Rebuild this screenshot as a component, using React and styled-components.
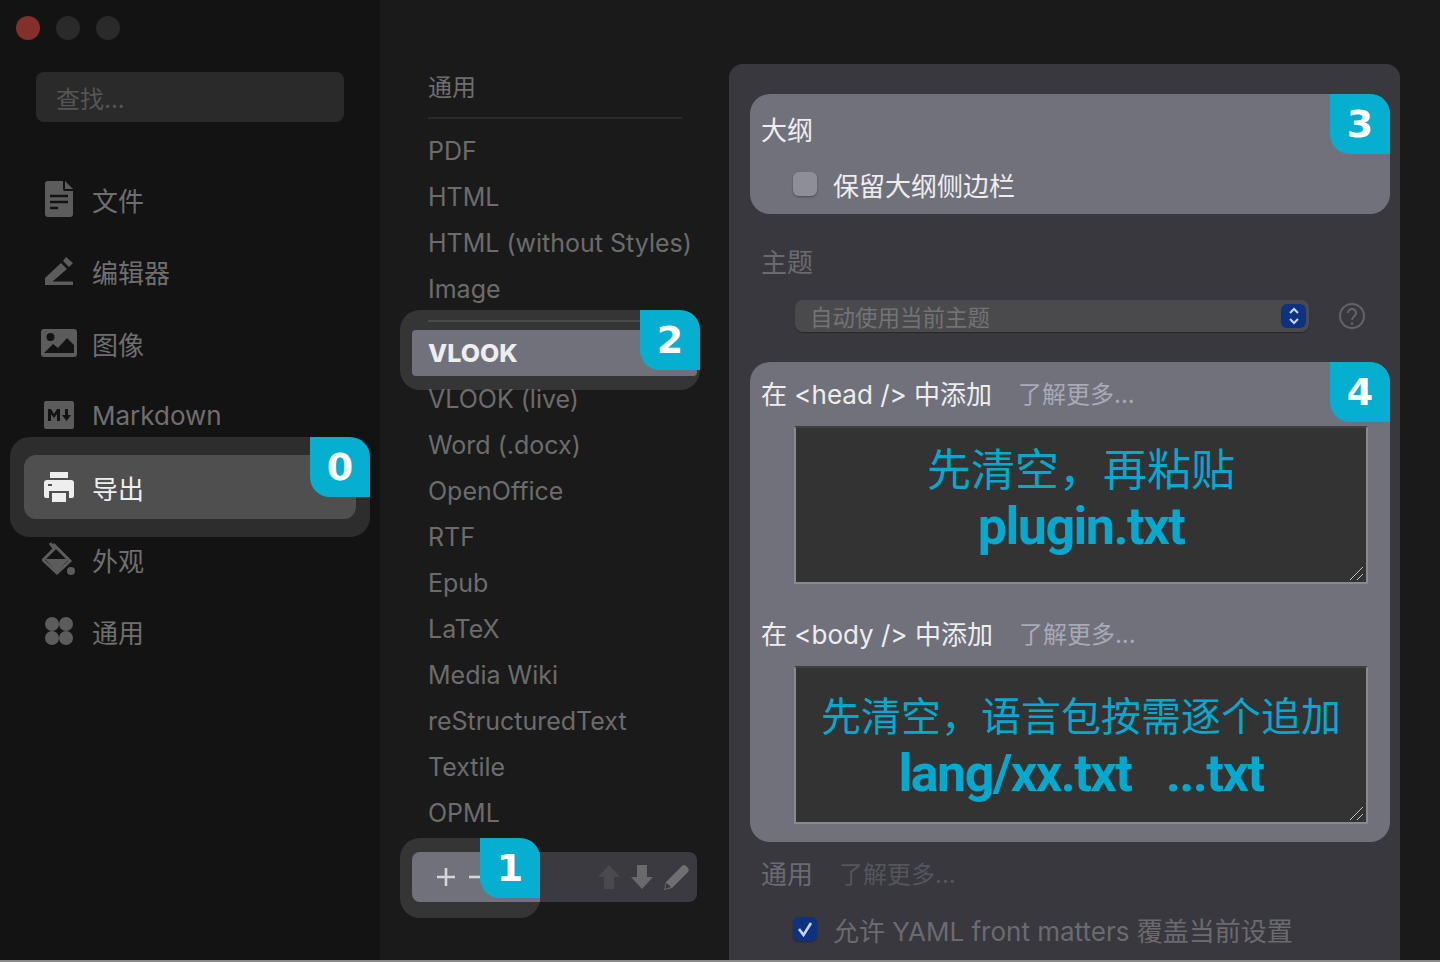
import React from "react";
import styled, { createGlobalStyle } from "styled-components";

const FONT = `Inter, "Noto Sans CJK SC", sans-serif`;
const CYAN = "#06aed0";
const ROW = "#71717c";

const Global = createGlobalStyle`
  html, body { margin: 0; padding: 0; background: #1a1a1a; }
  body { font-family: ${FONT}; overflow: hidden; }
  * { box-sizing: border-box; }
`;

const Window = styled.div`
  width: 1440px; height: 962px; display: flex; flex-direction: column; overflow: hidden;
`;
const Main = styled.div`
  flex: 1; min-height: 0; display: flex;
`;
const BottomLine = styled.div`
  height: 2px; background: #8a8a8a;
`;

/* ---------- sidebar ---------- */
const Sidebar = styled.aside`
  width: 380px; flex: none; background: #131313; padding-top: 16px; isolation: isolate;
`;
const Lights = styled.div`
  display: flex; gap: 16px; padding-left: 16px;
`;
const Light = styled.span`
  width: 24px; height: 24px; border-radius: 50%; background: ${p => p.$c};
`;
const Search = styled.div`
  margin: 32px 0 0 36px; width: 308px; height: 50px; border-radius: 8px; background: #2a2a2a;
  padding-left: 20px; display: flex; align-items: center; font-size: 24px; color: #555;
`;
const Nav = styled.nav`
  margin-top: 45px; display: flex; flex-direction: column; gap: 8px; padding: 0 24px;
`;
const NavRow = styled.div`
  position: relative; height: 64px; display: flex; align-items: center; gap: 14px;
  padding-left: 16px; border-radius: 12px; font-size: 26px;
  color: ${p => (p.$active ? "#eeeeee" : "#6f6f6f")};
  background: ${p => (p.$active ? "#4f4f4f" : "transparent")};
  ${p => p.$active && `
    &::before {
      content: ""; position: absolute; inset: -18px -14px; border-radius: 20px;
      background: #2d2d2d; z-index: -1;
    }
  `}
`;
const IconSlot = styled.span`
  width: 38px; height: 38px; flex: none; display: flex; align-items: center; justify-content: center;
  svg { display: block; }
`;
const Badge = styled.span`
  position: absolute; z-index: 3; top: ${p => p.$top || 0}px; right: ${p => p.$right || 0}px;
  width: 60px; height: 60px; background: ${CYAN}; border-radius: 0 20px 0 20px;
  display: flex; align-items: center; justify-content: center;
  color: #fff; font: bold 38px "DejaVu Sans", sans-serif;
`;

/* ---------- export list ---------- */
const ListColumn = styled.section`
  width: 349px; flex: none; padding: 65px 47px 0 48px; isolation: isolate; background: #1a1a1a;
`;
const ListHeading = styled.div`
  height: 46px; line-height: 46px; font-size: 24px; color: #6e6e6e;
`;
const Rule = styled.div`
  height: 2px; background: ${p => p.$c}; margin: ${p => p.$m};
`;
const ListItem = styled.div`
  position: relative; height: 46px; line-height: 46px; font-size: 25px; white-space: nowrap;
  color: #6c6c6c;
  ${p => p.$selected && `
    margin: 0 -15px 0 -16px; padding-left: 16px; background: ${ROW}; border-radius: 4px;
    color: #eeeeee; font-weight: 800;
    &::before {
      content: ""; position: absolute; top: -20px; left: -12px; right: -3px; bottom: -14px;
      border-radius: 20px; background: #353535; z-index: -1;
    }
  `}
`;
const Toolbar = styled.div`
  margin: 16px -15px 0 -16px; height: 50px; display: flex; background: #3a3a40; border-radius: 8px;
`;
const ToolLeft = styled.div`
  position: relative; width: 128px; background: ${ROW}; border-radius: 8px 0 0 8px;
  display: flex; align-items: center; padding-left: 24px; gap: 13px;
  &::before {
    content: ""; position: absolute; top: -14px; left: -12px; right: 0; bottom: -16px;
    border-radius: 20px; background: #353535; z-index: -1;
  }
`;
const ToolRight = styled.div`
  flex: 1; display: flex; align-items: center; justify-content: flex-end; gap: 11px; padding-right: 7px;
`;

/* ---------- settings panel ---------- */
const Panel = styled.section`
  width: 671px; flex: none; margin-top: 64px; background: #38383e; border-radius: 14px 14px 0 0;
  padding: 30px 10px 0 21px; overflow: hidden;
`;
const Section = styled.div`
  position: relative; background: ${ROW}; border-radius: 20px; padding: ${p => p.$pad};
  margin-top: ${p => p.$mt || 0}px; height: ${p => p.$h}px;
`;
const Title = styled.div`
  height: 36px; line-height: 36px; font-size: 26px; white-space: nowrap; padding-left: ${p => p.$pl ?? 11}px;
  margin-top: ${p => p.$mt || 0}px; color: ${p => p.$c || "#eeeeee"}; display: flex;
`;
const More = styled.span`
  margin-left: ${p => p.$ml || 26}px; font-size: 24px; color: ${p => p.$c || "#a9a9b8"};
`;
const CheckRow = styled.div`
  height: 36px; display: flex; align-items: center; gap: 16px; margin: ${p => p.$m};
  font-size: 26px; white-space: nowrap; color: ${p => p.$c};
`;
const Check = styled.span`
  width: 24px; height: 24px; border-radius: 6px; flex: none; display: flex; align-items: center; justify-content: center;
  background: ${p => p.$on ? "#0d3380" : "#8e8e99"};
  box-shadow: 0 1px 2px rgba(0,0,0,.35);
`;
const SelectRow = styled.div`
  display: flex; align-items: center; margin: 19px 0 0 45px; gap: 30px;
`;
const Select = styled.div`
  position: relative; width: 514px; height: 32px; border-radius: 8px; background: #4a4a4d; padding-left: 15px;
  display: flex; align-items: center; font-size: 22.5px; color: #737376; box-shadow: 0 1px 1px rgba(0,0,0,.3);
`;
const Stepper = styled.span`
  position: absolute; right: 3px; top: 4px; width: 25px; height: 24px; border-radius: 6px; background: #0d3380;
  display: flex; align-items: center; justify-content: center;
`;
const Code = styled.div`
  position: relative; margin: 13px 0 0 44px; width: 574px; height: 158px; background: #333;
  border: 2px solid #8a8a8a; border-top-color: #3f3f3f; border-left-color: #8a8a8a;
  text-align: center; color: #04a9cf; padding-top: ${p => p.$pt}px;
`;
const CodeNote = styled.div`
  font-size: ${p => p.$s}px; line-height: 56px; white-space: nowrap;
`;
const CodeFile = styled.div`
  font: bold 52px/58px Roboto, sans-serif; letter-spacing: ${p => p.$ls}px; white-space: pre;
`;
const Grip = styled.svg`
  position: absolute; right: 1px; bottom: 1px;
`;

const I = ({ w, h, children, ...r }) => (
  <svg width={w} height={h} viewBox={`0 0 ${w} ${h}`} {...r}>{children}</svg>
);

const GripIcon = () => (
  <Grip width="16" height="16" viewBox="0 0 16 16">
    <path d="M1 15 14 2M8 15l6-6" stroke="#ccc" strokeWidth="1" />
    <path d="M2 15 15 2M9 15l6-6" stroke="#222" strokeWidth="1" />
  </Grip>
);

const c = "#5c5c5c";
const icons = {
  file: <I w={28} h={36}><path d="M3 0h15v8a2 2 0 0 0 2 2h8v23a3 3 0 0 1-3 3H3a3 3 0 0 1-3-3V3a3 3 0 0 1 3-3zM20 0l8 8h-8z" fill={c} /><path d="M5 15h18M5 21h18M5 27h8" stroke="#131313" strokeWidth="2.4" /></I>,
  pen: <I w={28} h={28}><path d="M0 21 16 6l6 6-15 13v0H0zM18 4l3-4 7 6-4 4zM0 24.500h28V28H0z" fill={c} /></I>,
  image: <I w={36} h={28}><path fillRule="evenodd" d="M3 0h30a3 3 0 0 1 3 3v22a3 3 0 0 1-3 3H3a3 3 0 0 1-3-3V3a3 3 0 0 1 3-3z" fill={c} /><circle cx="9.500" cy="8" r="4" fill="#131313" /><path d="M3 24l9-9 5 4 9-10 7 7v8z" fill="#131313" /></I>,
  md: <I w={30} h={28}><rect width="30" height="28" rx="2" fill={c} /><path d="M4 20V8h3l3 5 3-5h3v12h-3v-7l-3 4-3-4v7zM21 8h3v6h3l-4.500 6-4.500-6h3z" fill="#131313" /></I>,
  printer: <I w={30} h={30}><path d="M6 0h18v6H6zM3 8h24a3 3 0 0 1 3 3v13a2 2 0 0 1-2 2h-3v-7H5v7H2a2 2 0 0 1-2-2V11a3 3 0 0 1 3-3zM8 21h14v9H8z" fill="#eeeeee" /><rect x="4" y="12" width="4" height="2" fill="#4f4f4f" /></I>,
  bucket: <I w={34} h={34}><path d="M11 2 28 19 15 31 1 18 12 7" fill="none" stroke={c} strokeWidth="3" /><path d="M3 17h24L15 30z" fill={c} /><path d="M8 1l5 7" stroke={c} strokeWidth="3" /><circle cx="29" cy="29" r="4" fill={c} /></I>,
  grid: <I w={28} h={28}><circle cx="7" cy="7" r="7" fill={c} /><circle cx="21" cy="7" r="7" fill={c} /><circle cx="7" cy="21" r="7" fill={c} /><circle cx="21" cy="21" r="7" fill={c} /></I>,
};

const nav = [
  ["file", "文件"], ["pen", "编辑器"], ["image", "图像"], ["md", "Markdown"],
  ["printer", "导出", true], ["bucket", "外观"], ["grid", "通用"],
];
const before = ["PDF", "HTML", "HTML (without Styles)", "Image"];
const after = ["VLOOK (live)", "Word (.docx)", "OpenOffice", "RTF", "Epub", "LaTeX", "Media Wiki", "reStructuredText", "Textile", "OPML"];

export default function App() {
  return (
    <Window>
      <Global />
      <Main>
        <Sidebar>
          <Lights>
            <Light $c="#83302b" /><Light $c="#2a2a2a" /><Light $c="#2a2a2a" />
          </Lights>
          <Search>查找...</Search>
          <Nav>
            {nav.map(([k, t, a]) => (
              <NavRow key={t} $active={a}>
                <IconSlot>{icons[k]}</IconSlot>
                {t}
                {a && <Badge $top={-18} $right={-14}>0</Badge>}
              </NavRow>
            ))}
          </Nav>
        </Sidebar>

        <ListColumn>
          <ListHeading>通用</ListHeading>
          <Rule $c="#2a2a2a" $m="6px 0 9px" />
          {before.map(t => <ListItem key={t}>{t}</ListItem>)}
          <Rule $c="#4a4a4a" $m="8px 0" />
          <ListItem $selected>VLOOK<Badge $top={-20} $right={-3}>2</Badge></ListItem>
          {after.map(t => <ListItem key={t}>{t}</ListItem>)}
          <Toolbar>
            <ToolLeft>
              <I w={20} h={20}><path d="M10 1v18M1 10h18" stroke="#d6d6d6" strokeWidth="2.600" /></I>
              <I w={14} h={20}><path d="M0 10h14" stroke="#d6d6d6" strokeWidth="2.600" /></I>
              <Badge $top={-14}>1</Badge>
            </ToolLeft>
            <ToolRight>
              <I w={22} h={24}><path d="M11 0 22 12h-6v12H6V12H0z" fill="#4a4a4e" /></I>
              <I w={22} h={24}><path d="M6 0h10v12h6L11 24 0 12h6z" fill="#6a6a6c" /></I>
              <I w={26} h={26}><path d="M0 26l2-8L18 2a3 3 0 0 1 4 0l2 2a3 3 0 0 1 0 4L8 24z" fill="#6f6f6f" /><path d="M1 25l1.500-6 4.500 4z" fill="#38383e" /></I>
            </ToolRight>
          </Toolbar>
        </ListColumn>

        <Panel>
          <Section $pad="19px 0 0" $h={120}>
            <Title>大纲</Title>
            <CheckRow $m="17px 0 0 43px" $c="#eeeeee"><Check />保留大纲侧边栏</CheckRow>
            <Badge>3</Badge>
          </Section>

          <Title $mt={31} $c="#6b6b6f">主题</Title>
          <SelectRow>
            <Select>
              自动使用当前主题
              <Stepper>
                <I w={12} h={18}><path d="M2 6l4-4 4 4M2 12l4 4 4-4" fill="none" stroke="#c9d3e8" strokeWidth="2" /></I>
              </Stepper>
            </Select>
            <I w={26} h={26}>
              <circle cx="13" cy="13" r="12" fill="none" stroke="#646468" strokeWidth="2" />
              <path d="M9 10a4 4 0 1 1 6.500 3c-1.500 1-2.500 1.700-2.500 4" fill="none" stroke="#646468" strokeWidth="2" />
              <circle cx="13" cy="20.500" r="1.300" fill="#646468" />
            </I>
          </SelectRow>

          <Section $pad="15px 0 0" $h={480} $mt={30}>
            <Title>在 &lt;head /&gt; 中添加<More>了解更多...</More></Title>
            <Code $pt={14}>
              <CodeNote $s={44}>先清空，再粘贴</CodeNote>
              <CodeFile $ls={-1.5}>plugin.txt</CodeFile>
              <GripIcon />
            </Code>
            <Title $mt={33}>在 &lt;body /&gt; 中添加<More>了解更多...</More></Title>
            <Code $pt={21}>
              <CodeNote $s={40}>先清空，语言包按需逐个追加</CodeNote>
              <CodeFile $ls={-1.5}>lang/xx.txt   ...txt</CodeFile>
              <GripIcon />
            </Code>
            <Badge>4</Badge>
          </Section>

          <Title $mt={15} $c="#6b6b6f">通用<More $c="#55555e">了解更多...</More></Title>
          <CheckRow $m="18px 0 0 43px" $c="#6b6b6f">
            <Check $on>
              <I w={16} h={16}><path d="M2 8l4.500 6L14 2" fill="none" stroke="#c9d3e8" strokeWidth="2.600" /></I>
            </Check>
            允许 YAML front matters 覆盖当前设置
          </CheckRow>
        </Panel>
      </Main>
      <BottomLine />
    </Window>
  );
}
